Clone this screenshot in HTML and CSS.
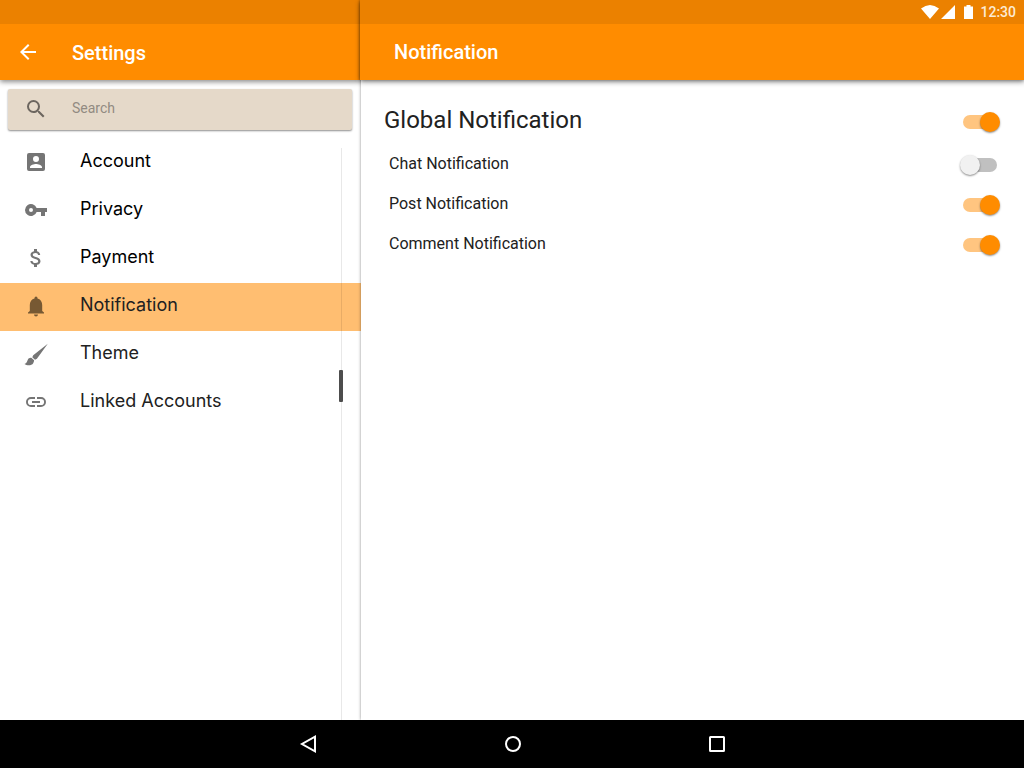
FILE: index.html
```html
<!DOCTYPE html>
<html lang="en">
<head>
<meta charset="utf-8">
<meta name="viewport" content="width=device-width, initial-scale=1">
<title>Settings</title>
<link rel="stylesheet" href="styles.css">
</head>
<body>
<div class="panes">
  <aside class="sidebar">
    <header class="top">
      <div class="status"></div>
      <div class="appbar">
        <button class="back" type="button" aria-label="Back">
          <svg class="icon" viewBox="0 0 24 24"><path d="M20 11H7.83l5.59-5.59L12 4l-8 8 8 8 1.41-1.41L7.83 13H20z"/></svg>
        </button>
        <h1 class="title">Settings</h1>
      </div>
    </header>
    <label class="search">
      <svg class="icon" viewBox="0 0 24 24"><path d="M15.5 14h-.79l-.28-.27A6.47 6.47 0 0 0 16 9.5 6.5 6.5 0 1 0 9.5 16c1.61 0 3.09-.59 4.23-1.57l.27.28v.79l5 4.99L20.49 19zm-6 0a4.5 4.5 0 1 1 0-9 4.5 4.5 0 0 1 0 9z"/></svg>
      <input class="search-input" type="text" placeholder="Search" aria-label="Search">
    </label>
    <nav class="menu">
      <a class="item strong" href="#account"><svg class="icon" viewBox="0 0 24 24"><path d="M3 5v14a2 2 0 0 0 2 2h14a2 2 0 0 0 2-2V5a2 2 0 0 0-2-2H5a2 2 0 0 0-2 2zm12 4a3 3 0 1 1-6 0 3 3 0 0 1 6 0zm-9 8c0-2 4-3.1 6-3.1s6 1.1 6 3.1v1H6z"/></svg><span>Account</span></a>
      <a class="item strong" href="#privacy"><svg class="icon" viewBox="0 0 24 24"><path d="M12.65 10A6 6 0 1 0 12.65 14H17v4h4v-4h2v-4zM7 14a2 2 0 1 1 0-4 2 2 0 0 1 0 4z"/></svg><span>Privacy</span></a>
      <a class="item strong" href="#payment"><svg class="icon" viewBox="0 0 24 24"><path d="M11.8 10.9c-2.27-.59-3-1.2-3-2.15 0-1.09 1.01-1.85 2.7-1.85 1.78 0 2.44.85 2.5 2.1h2.21c-.07-1.72-1.12-3.3-3.21-3.81V3h-3v2.16c-1.94.42-3.5 1.68-3.5 3.61 0 2.31 1.91 3.46 4.7 4.13 2.5.6 3 1.48 3 2.41 0 .69-.49 1.79-2.7 1.79-2.06 0-2.87-.92-2.98-2.1h-2.2c.12 2.19 1.76 3.42 3.68 3.83V21h3v-2.15c1.95-.37 3.5-1.5 3.5-3.55 0-2.84-2.43-3.81-4.7-4.4z"/></svg><span>Payment</span></a>
      <a class="item active" href="#notification" aria-current="page"><svg class="icon" viewBox="0 0 24 24"><path d="M12 22.5a2 2 0 0 0 2-1.9h-4a2 2 0 0 0 2 1.9zM18.2 17v-6c0-3.07-1.84-5.74-4.7-6.42V4a1.5 1.500 0 0 0-3 0v.58C7.630 5.260 5.800 7.920 5.800 11v6L4 18.600v1h16v-1z"/></svg><span>Notification</span></a>
      <a class="item" href="#theme"><svg class="icon" viewBox="0 0 24 24"><path d="M23.8 1.8 9.200 13.300 8.300 15.200l2.700 2.600 1.900-1zM7.600 15.900c-1.600-.4-3.100.3-3.800 1.800-.8 1.800-1 3.500-3.300 4.300C3 24 7.800 23.700 9.200 21.200c.7-1.200.9-2.100.9-2.900z"/></svg><span>Theme</span></a>
      <a class="item" href="#linked"><svg class="icon" viewBox="0 0 24 24"><path d="M3.9 12A3.1 3.1 0 0 1 7 8.900h4V7H7a5 5 0 0 0 0 10h4v-1.900H7A3.100 3.100 0 0 1 3.900 12zM8 13h8v-2H8zm9-6h-4v1.900h4a3.100 3.100 0 0 1 0 6.200h-4V17h4a5 5 0 0 0 0-10z"/></svg><span>Linked Accounts</span></a>
      <div class="track"><div class="thumb"></div></div>
    </nav>
  </aside>
  <main class="detail">
    <header class="top">
      <div class="status">
        <svg class="signals" viewBox="0 0 52 14"><path d="M0 3.500Q9-3.500 18 3.500L9 14zM34 0v14H20zM43 1.500h2.500V0h4v1.500H52V14h-9z"/></svg>
        <time>12:30</time>
      </div>
      <div class="appbar"><h2 class="title">Notification</h2></div>
    </header>
    <form class="options">
      <label class="option lead"><span>Global Notification</span><input class="switch" type="checkbox" role="switch" checked></label>
      <label class="option"><span>Chat Notification</span><input class="switch" type="checkbox" role="switch"></label>
      <label class="option"><span>Post Notification</span><input class="switch" type="checkbox" role="switch" checked></label>
      <label class="option"><span>Comment Notification</span><input class="switch" type="checkbox" role="switch" checked></label>
    </form>
  </main>
</div>
<footer class="navbar">
  <button type="button" aria-label="Back"><svg class="icon" viewBox="0 0 24 24"><path d="M18 4.700v14.600L5 12z"/></svg></button>
  <button type="button" aria-label="Home"><svg class="icon" viewBox="0 0 24 24"><circle cx="12" cy="12" r="7"/></svg></button>
  <button type="button" aria-label="Overview"><svg class="icon" viewBox="0 0 24 24"><rect x="5" y="5" width="14" height="14" rx=".5"/></svg></button>
</footer>
</body>
</html>
```
FILE: styles.css
```css
* { box-sizing: border-box; }

body {
  margin: 0;
  min-height: 100vh;
  display: flex;
  flex-direction: column;
  font-family: Roboto, sans-serif;
  color: #212121;
  background: #fff;
}

button {
  border: 0;
  padding: 0;
  background: none;
  cursor: pointer;
}

.icon {
  display: block;
  flex: none;
  width: 24px;
  height: 24px;
  fill: currentColor;
}

.panes {
  flex: 1;
  display: grid;
  grid-template-columns: 361px 1fr;
}

.sidebar {
  display: flex;
  flex-direction: column;
}

.top {
  background: #ff8c00;
  color: #fff;
  box-shadow: 0 2px 5px rgba(0, 0, 0, 0.45);
}

.status {
  height: 24px;
  padding: 0 8px;
  display: flex;
  align-items: center;
  justify-content: flex-end;
  gap: 7px;
  background: #eb8100;
  font-size: 14px;
  font-weight: 500;
  color: #fdebd4;
}

.signals {
  width: 52px;
  height: 14px;
  fill: #fff;
}

.appbar {
  height: 56px;
  display: flex;
  align-items: center;
  padding: 0 16px;
}

.title {
  margin: 0;
  font-size: 20px;
  font-weight: 500;
  line-height: 24px;
}

.sidebar .title {
  padding-top: 2px;
}

.back {
  margin-right: 32px;
  color: #fff;
}

.search {
  display: flex;
  align-items: center;
  gap: 24px;
  height: 41px;
  margin: 9px 9px 9px 8px;
  padding: 0 16px 2px;
  border-radius: 2px;
  background: #e5d9c9;
  box-shadow: 0 1px 2px rgba(0, 0, 0, 0.45);
  color: #6c665f;
}

.search-input {
  flex: 1;
  min-width: 0;
  padding: 0 0 2px;
  border: 0;
  outline: 0;
  background: none;
  font: 14px/20px Roboto, sans-serif;
  color: #212121;
}

.search-input::placeholder {
  color: #928b82;
  opacity: 1;
}

.menu {
  position: relative;
  flex: 1;
}

.item {
  display: flex;
  align-items: center;
  gap: 32px;
  height: 48px;
  padding: 0 24px 2px;
  font: 18px/24px Inter, sans-serif;
  color: #212121;
  text-decoration: none;
}

.item span {
  padding-bottom: 2px;
}

.item .icon {
  color: #757575;
}

.strong {
  color: #000;
}

.active {
  background: #ffbe71;
}

.active .icon {
  color: #775933;
}

.track {
  position: absolute;
  top: 9px;
  right: 19px;
  bottom: 0;
  width: 1px;
  background: rgba(0, 0, 0, 0.09);
}

.thumb {
  position: absolute;
  top: 222px;
  left: -2px;
  width: 4px;
  height: 32px;
  border-radius: 1px;
  background: #4d4d4d;
}

.detail {
  position: relative;
  background: #fff;
  box-shadow: 0 0 3px rgba(0, 0, 0, 0.45);
}

.detail .top {
  margin-left: -1px;
  box-shadow: 0 2px 5px rgba(0, 0, 0, 0.45), 0 0 3px rgba(0, 0, 0, 0.3);
}

.detail .appbar {
  padding: 0 34px;
}

.options {
  padding: 20px 24px 0 23px;
}

.option {
  display: flex;
  align-items: flex-start;
  justify-content: space-between;
  height: 40px;
  padding-left: 5px;
  font-size: 16px;
  line-height: 40px;
}

.option.lead {
  height: 44px;
  padding-left: 0;
  font-size: 24px;
}

.switch {
  appearance: none;
  display: flex;
  align-items: center;
  width: 40px;
  height: 20px;
  margin: 11px 0 0;
  padding: 0;
  cursor: pointer;
}

.lead .switch {
  margin-top: 12px;
}

.switch::before {
  content: "";
  width: 34px;
  height: 14px;
  margin-left: 3px;
  border-radius: 7px;
  background: #c0c0c0;
}

.switch::after {
  content: "";
  width: 20px;
  height: 20px;
  margin-left: -37px;
  border-radius: 50%;
  background: #f1f1f1;
  box-shadow: 0 1px 2px rgba(0, 0, 0, 0.45);
}

.switch:checked::before {
  background: #ffc580;
}

.switch:checked::after {
  margin-left: -17px;
  background: #ff8c00;
}

.navbar {
  position: relative;
  display: flex;
  justify-content: center;
  gap: 180px;
  height: 48px;
  padding-left: 2px;
  background: #000;
}

.navbar .icon {
  fill: none;
  stroke: #fff;
  stroke-width: 2;
}
```
